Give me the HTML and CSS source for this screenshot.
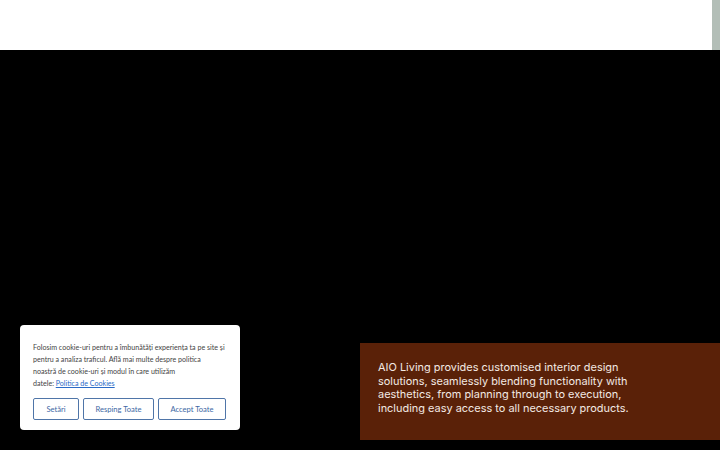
FILE: index.html
```html
<!DOCTYPE html>
<html lang="ro">
<head>
  <meta charset="UTF-8">
  <meta name="viewport" content="width=device-width, initial-scale=1">
  <title>AIO Living</title>
  <link rel="stylesheet" href="styles.css">
</head>
<body>

  <!-- Bara de sus -->
  <header class="top-bar">
    <div class="top-bar-inner"></div>
    <div class="scroll-strip"></div>
  </header>

  <!-- Secțiunea hero -->
  <section class="hero">
    <div class="hero-card">
      <p>AIO Living provides customised interior design solutions, seamlessly blending functionality with aesthetics, from planning through to execution, including easy access to all necessary products.</p>
    </div>
  </section>

  <!-- Banner cookie -->
  <div class="cookie-banner">
    <p class="cookie-text">Folosim cookie-uri pentru a îmbunătăți experiența ta pe site și pentru a analiza traficul. Află mai multe despre politica<br>noastră de cookie-uri și modul în care utilizăm <span class="nowrap">datele: <a href="#">Politica de Cookies</a></span></p>
    <div class="cookie-actions">
      <button class="cookie-btn btn-setari">Setări</button>
      <button class="cookie-btn btn-respinge">Resping Toate</button>
      <button class="cookie-btn btn-accept">Accept Toate</button>
    </div>
  </div>

</body>
</html>
```

FILE: styles.css
```css
/* Reset */
* { margin: 0; padding: 0; box-sizing: border-box; }
body { background: #000; font-family: "Lato", "Open Sans", sans-serif; height: 450px; overflow: hidden; }

.top-bar { display: flex; height: 50px; background: #fff; }
.top-bar-inner { flex: 1; }
.scroll-strip { width: 8px; background: #b3beb7; }

.hero { height: 400px; display: flex; justify-content: flex-end; align-items: flex-end; padding-bottom: 10px; }
.hero-card { width: 360px; height: 97px; background: #5a2108; padding: 18px 66px 0 18px; }
.hero-card p { font-family: "Inter", sans-serif; font-size: 10.95px; line-height: 13.6px; color: #f3e9e3; }

.cookie-banner { position: fixed; left: 20px; top: 325px; width: 220px; height: 105px; background: #fff; border-radius: 4px; padding: 17px 13px 11px 13px; }
.cookie-text { font-size: 7.1px; line-height: 12px; color: #444; }
.cookie-text a { color: #2a6bc7; text-decoration: underline; }
.nowrap { white-space: nowrap; }
.cookie-actions { display: flex; gap: 4px; margin-top: 8px; }
.cookie-btn { height: 22px; background: #fff; border: 1.5px solid #4f75a8; border-radius: 2px; color: #3d68a4; font-family: inherit; font-size: 7.6px; cursor: pointer; }
.btn-setari { width: 46px; }
.btn-respinge { width: 71px; }
.btn-accept { width: 68px; }
.cookie-btn:hover { background: #eef3fa; }
```
